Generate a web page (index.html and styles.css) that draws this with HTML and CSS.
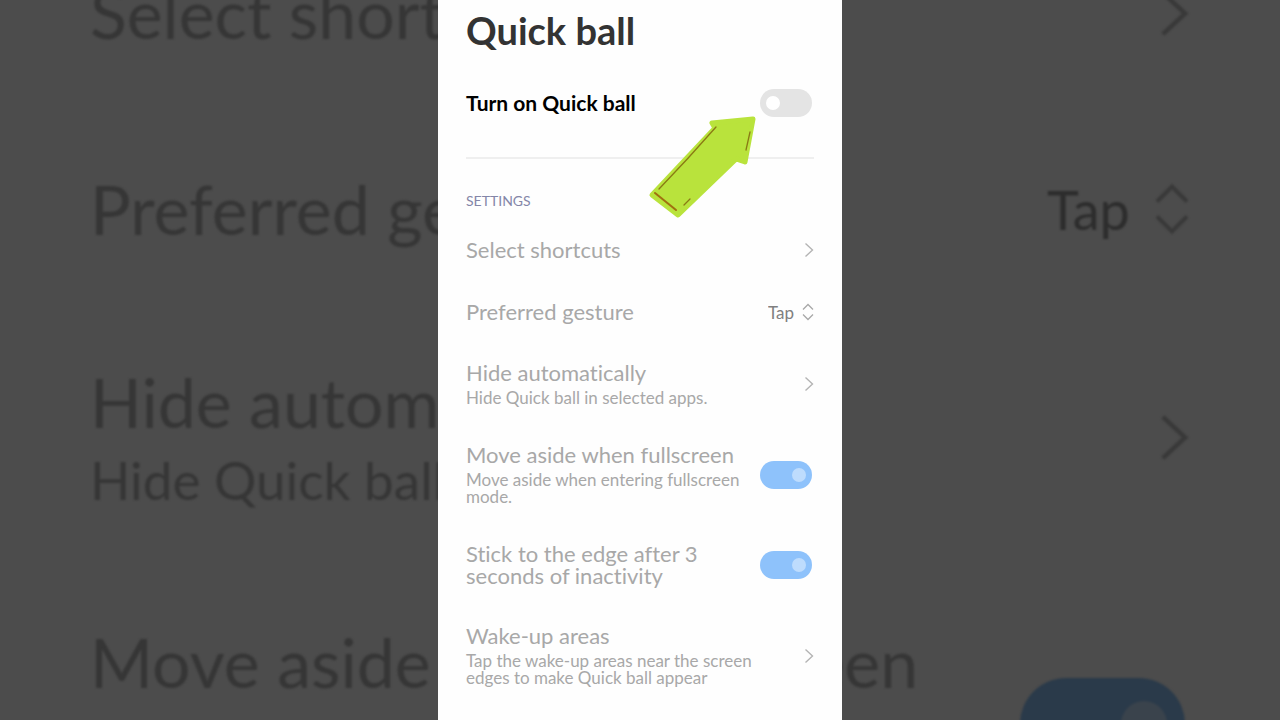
FILE: index.html
```
<!DOCTYPE html>
<html lang="en">
<head>
    <meta charset="UTF-8">
    <meta name="viewport" content="width=device-width, initial-scale=1.0">
    <title>Quick ball</title>
    <link rel="stylesheet" href="styles.css">
</head>
<body>
    <!-- enlarged, darkened copy of the list behind the phone screen -->
    <div class="backdrop" aria-hidden="true">
        <div class="list">
            <a class="row" href="#shortcuts" tabindex="-1">
                <span class="title">Select shortcuts</span>
                <svg class="chevron" viewBox="0 0 10 16"><path d="M1.5 1.5 8.5 8 1.5 14.5"/></svg>
            </a>
            <div class="row">
                <span class="title">Preferred gesture</span>
                <span class="picker">
                    <select aria-label="Preferred gesture" tabindex="-1" disabled><option>Tap</option></select>
                    <svg class="updown" viewBox="0 0 12 18"><path d="M1 6.5 6 1.5 11 6.5M1 11.5 6 16.5 11 11.5"/></svg>
                </span>
            </div>
            <a class="row" href="#hide" tabindex="-1">
                <span class="text">
                    <span class="title">Hide automatically</span>
                    <span class="sub">Hide Quick ball in selected apps.</span>
                </span>
                <svg class="chevron" viewBox="0 0 10 16"><path d="M1.5 1.5 8.5 8 1.5 14.5"/></svg>
            </a>
            <label class="row">
                <span class="text">
                    <span class="title">Move aside when fullscreen</span>
                    <span class="sub">Move aside when entering fullscreen<br>mode.</span>
                </span>
                <input class="toggle" type="checkbox" tabindex="-1" checked disabled>
            </label>
        </div>
    </div>

    <main class="phone">
        <h1>Quick ball</h1>
        <div class="main-switch">
            <label class="row" for="quickBall">
                <span class="title">Turn on Quick ball</span>
                <input class="toggle" id="quickBall" type="checkbox">
            </label>
            <svg class="arrow" viewBox="0 0 110 104">
                <path class="arrow-body" d="M64 8 105 4 97 47 91 45Q89 43 86 46L30 100 4 80 67 13Z"/>
                <path class="arrow-line" d="M68 12Q40 44 11 74M102 17 98 35M36 90 42 84"/>
                <path class="arrow-line thick" d="M7 78 28 95"/>
            </svg>
        </div>

        <h2>SETTINGS</h2>
        <div class="list">
            <a class="row" href="#shortcuts">
                <span class="title">Select shortcuts</span>
                <svg class="chevron" viewBox="0 0 10 16"><path d="M1.5 1.5 8.5 8 1.5 14.5"/></svg>
            </a>
            <div class="row">
                <label class="title" for="gesture">Preferred gesture</label>
                <span class="picker">
                    <select id="gesture" disabled><option>Tap</option></select>
                    <svg class="updown" viewBox="0 0 12 18"><path d="M1 6.5 6 1.5 11 6.5M1 11.5 6 16.5 11 11.5"/></svg>
                </span>
            </div>
            <a class="row" href="#hide">
                <span class="text">
                    <span class="title">Hide automatically</span>
                    <span class="sub">Hide Quick ball in selected apps.</span>
                </span>
                <svg class="chevron" viewBox="0 0 10 16"><path d="M1.5 1.5 8.5 8 1.5 14.5"/></svg>
            </a>
            <label class="row" for="moveAside">
                <span class="text">
                    <span class="title">Move aside when fullscreen</span>
                    <span class="sub">Move aside when entering fullscreen<br>mode.</span>
                </span>
                <input class="toggle" id="moveAside" type="checkbox" checked disabled>
            </label>
            <label class="row" for="stickEdge">
                <span class="title">Stick to the edge after 3<br>seconds of inactivity</span>
                <input class="toggle" id="stickEdge" type="checkbox" checked disabled>
            </label>
            <a class="row" href="#wakeup">
                <span class="text">
                    <span class="title">Wake-up areas</span>
                    <span class="sub">Tap the wake-up areas near the screen<br>edges to make Quick ball appear</span>
                </span>
                <svg class="chevron" viewBox="0 0 10 16"><path d="M1.5 1.5 8.5 8 1.5 14.5"/></svg>
            </a>
        </div>
    </main>
</body>
</html>
```
FILE: styles.css
```
* {
    box-sizing: border-box;
}
body {
    margin: 0;
    min-height: 100vh;
    display: flex;
    justify-content: center;
    position: relative;
    background-color: #4c4c4c;
    font-family: Lato, "Liberation Sans", sans-serif;
    font-variant-ligatures: none;
}
.phone {
    position: relative;
    width: 404px;
    max-width: 100%;
    padding: 10px 28px;
    background-color: #fefefe;
}
h1 {
    margin: 0;
    font-size: 38px;
    line-height: 40px;
    color: #333;
}
h2 {
    margin: 32px 0 8px;
    font-size: 14px;
    line-height: 20px;
    font-weight: normal;
    color: #8486a8;
}
.main-switch {
    position: relative;
    padding: 20px 0 21px;
    border-bottom: 2px solid #efefef;
}
.main-switch .title {
    font-size: 21px;
    font-weight: bold;
    color: #000;
}
.row {
    display: flex;
    justify-content: space-between;
    align-items: center;
    min-height: 62px;
    padding: 19px 0;
    color: #a8a8a8;
    text-decoration: none;
}
.text {
    display: flex;
    flex-direction: column;
    gap: 5px;
}
.title {
    font-size: 22px;
    line-height: 22px;
    white-space: nowrap;
}
.sub {
    font-size: 17px;
    line-height: 17px;
    white-space: nowrap;
}
.picker {
    display: flex;
    align-items: center;
    gap: 7px;
}
select {
    appearance: none;
    border: none;
    padding: 0;
    background: none;
    font-family: inherit;
    font-size: 17px;
    color: #808080;
    opacity: 1;
}
svg {
    display: block;
    flex: none;
    fill: none;
}
.chevron {
    width: 10px;
    height: 16px;
    stroke: #b4b4b4;
    stroke-width: 1.4;
}
.updown {
    width: 12px;
    height: 18px;
    stroke: #a8a8a8;
    stroke-width: 1.3;
}
.toggle {
    appearance: none;
    flex: none;
    display: flex;
    align-items: center;
    width: 52px;
    height: 28px;
    margin: 0 2px 0 0;
    padding: 0 6px;
    border-radius: 14px;
    background-color: #e4e4e4;
}
.toggle::before {
    content: "";
    width: 14px;
    height: 14px;
    border-radius: 50%;
    background-color: #fff;
}
.toggle:checked {
    justify-content: flex-end;
    background-color: #8ec2fb;
}
.toggle:checked::before {
    background-color: #bedcfd;
}

/* pointer arrow over the main switch */
.arrow {
    position: absolute;
    right: 56px;
    bottom: -62px;
    width: 110px;
    height: 104px;
}
.arrow-body {
    fill: #b9e33c;
    stroke: #b9e33c;
    stroke-width: 5;
    stroke-linejoin: round;
}
.arrow-line {
    stroke: #8a7a14;
    stroke-width: 1.3;
    stroke-linecap: round;
}
.arrow-line.thick {
    stroke: #a07010;
    stroke-width: 2;
}

/* backdrop */
.backdrop {
    position: absolute;
    inset: 0;
    overflow: hidden;
}
.backdrop .list {
    margin-top: -85px;
    padding: 0 90px;
    filter: blur(1px);
}
.backdrop .row {
    min-height: 196px;
    padding: 60px 0;
    color: #363636;
}
.backdrop .text {
    gap: 16px;
}
.backdrop .title {
    font-size: 68px;
    line-height: 70px;
}
.backdrop .sub {
    font-size: 53px;
    line-height: 54px;
}
.backdrop .picker {
    gap: 24px;
}
.backdrop select {
    font-size: 54px;
    color: #2d2d2d;
}
.backdrop .chevron {
    width: 32px;
    height: 51px;
    stroke: #393939;
}
.backdrop .updown {
    width: 36px;
    height: 54px;
    stroke: #393939;
}
.backdrop .toggle {
    width: 165px;
    height: 92px;
    margin-right: 5px;
    padding: 0 18px;
    border-radius: 46px;
    background-color: #2a3a4a;
}
.backdrop .toggle::before {
    width: 46px;
    height: 46px;
    background-color: #3a434c;
}
```
